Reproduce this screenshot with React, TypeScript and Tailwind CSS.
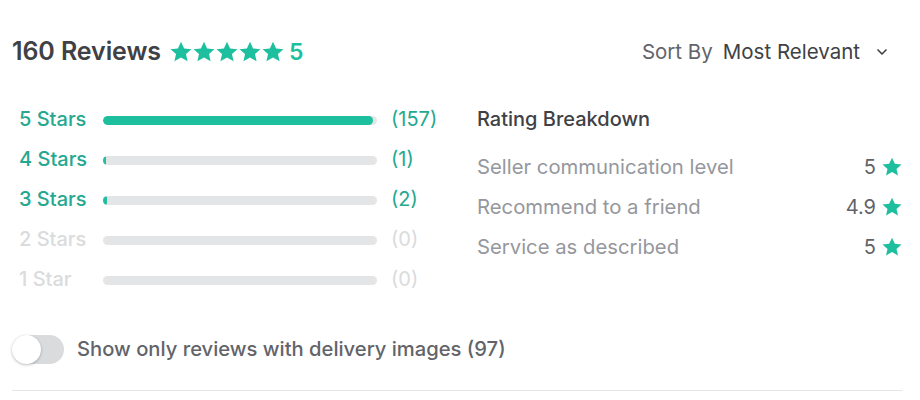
import { ChevronDown } from "lucide-react";

const TEAL = "#1dbf9f";

function Star({ size = 18 }: { size?: number }) {
  return (
    <svg width={size} height={size} viewBox="0 0 24 24" fill={TEAL}>
      <path d="M12 0.8l3.4 7.3 8 .8-6 5.4 1.8 7.9L12 18l-7.2 4.2 1.8-7.9-6-5.4 8-.8z" />
    </svg>
  );
}

const rows = [
  { label: "5 Stars", count: 157, pct: 98.5 },
  { label: "4 Stars", count: 1, pct: 1 },
  { label: "3 Stars", count: 2, pct: 1.3 },
  { label: "2 Stars", count: 0, pct: 0 },
  { label: "1 Star", count: 0, pct: 0 },
];

const breakdown = [
  { label: "Seller communication level", value: "5" },
  { label: "Recommend to a friend", value: "4.9" },
  { label: "Service as described", value: "5" },
];

export default function App() {
  return (
    <div
      className="w-[920px] h-[400px] bg-white pl-3 pr-[18px] pt-[36px]"
      style={{ fontFamily: "Inter, 'Open Sans', sans-serif" }}
    >
      <div className="flex items-center justify-between h-8">
        <div className="flex items-center">
          <h2 className="text-[25px] font-semibold text-[#404145] tracking-[-0.1px]">160 Reviews</h2>
          <div className="flex items-center ml-[9px] gap-[1px]">
            {[0, 1, 2, 3, 4].map((i) => (
              <Star key={i} size={22} />
            ))}
            <span className="ml-[4px] text-[23px] font-semibold text-[#1dbf9f]">5</span>
          </div>
        </div>
        <div className="flex items-center text-[20.5px] pr-[12px]">
          <span className="text-[#62646a]">Sort By</span>
          <span className="ml-[10px] text-[#404145]">Most Relevant</span>
          <ChevronDown className="ml-[14px] text-[#404145]" size={16} strokeWidth={2.5} />
        </div>
      </div>

      <div className="flex mt-[40px]">
        <div className="w-[465px] pl-[7px] flex flex-col gap-[18px]">
          {rows.map((r) => {
            const active = r.count > 0;
            return (
              <div key={r.label} className="flex items-center h-[22px]">
                <span
                  className={`w-[84px] text-[20px] font-medium ${active ? "text-[#25a88f]" : "text-[#dadbdd]"}`}
                >
                  {r.label}
                </span>
                <div className="relative w-[274px] h-[9px] rounded-full bg-[#e4e5e7] overflow-hidden mt-[3px]">
                  <div className="h-full rounded-full bg-[#1dbf9f]" style={{ width: `${r.pct}%` }} />
                </div>
                <span
                  className={`ml-[14px] text-[20px] ${active ? "text-[#25a88f]" : "text-[#dadbdd]"}`}
                >
                  ({r.count})
                </span>
              </div>
            );
          })}
        </div>

        <div className="flex-1">
          <div className="text-[20px] font-medium text-[#404145] h-[22px] leading-[22px]">Rating Breakdown</div>
          <div className="flex flex-col gap-[18px] mt-[26px]">
            {breakdown.map((b) => (
              <div key={b.label} className="flex items-center justify-between h-[22px]">
                <span className="text-[20.3px] text-[#95979d]">{b.label}</span>
                <span className="flex items-center gap-[6px] text-[20px] text-[#62646a]">
                  {b.value}
                  <Star size={20} />
                </span>
              </div>
            ))}
          </div>
        </div>
      </div>

      <div className="flex items-center mt-[44px]">
        <div className="relative w-[52px] h-[29px] rounded-full bg-[#dadbdd]">
          <div className="absolute left-0 top-0 w-[29px] h-[29px] rounded-full bg-white shadow-[0_1px_3px_rgba(0,0,0,0.25)]" />
        </div>
        <span className="ml-[13px] text-[20.2px] font-medium text-[#62646a]">
          Show only reviews with delivery images (97)
        </span>
      </div>

      <div className="mt-[26px] h-px bg-[#e4e5e7]" />
    </div>
  );
}
